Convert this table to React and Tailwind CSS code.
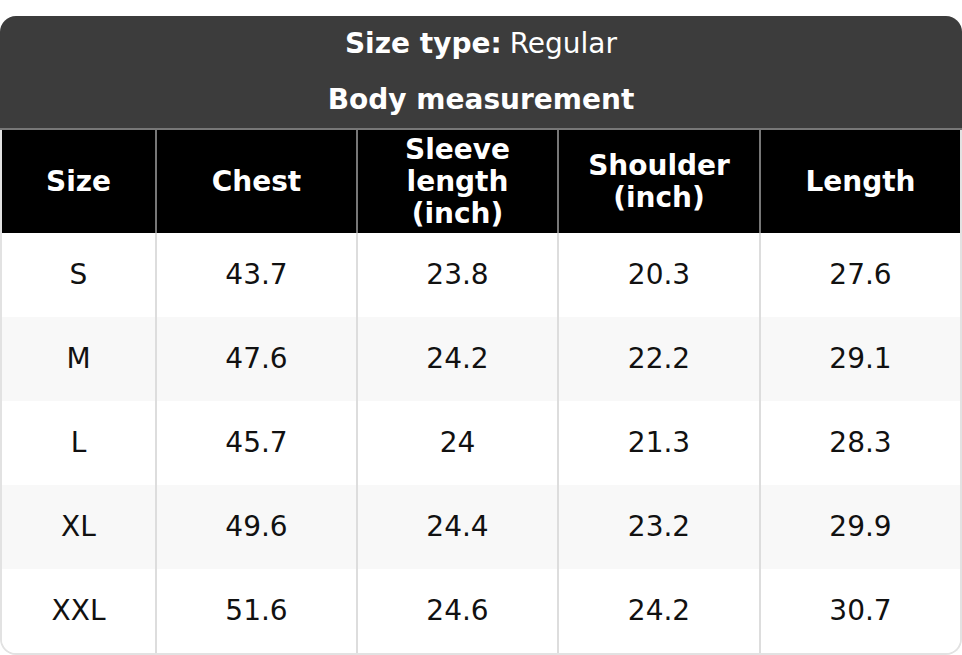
const columns = [
  ['Size'],
  ['Chest'],
  ['Sleeve', 'length', '(inch)'],
  ['Shoulder', '(inch)'],
  ['Length'],
]

const rows = [
  ['S', '43.7', '23.8', '20.3', '27.6'],
  ['M', '47.6', '24.2', '22.2', '29.1'],
  ['L', '45.7', '24', '21.3', '28.3'],
  ['XL', '49.6', '24.4', '23.2', '29.9'],
  ['XXL', '51.6', '24.6', '24.2', '30.7'],
]

const grid = 'grid grid-cols-[153px_201px_201px_202px_1fr]'

export default function App() {
  return (
    <div className="bg-white w-[962px] h-[655px] pt-4 text-[28px] font-['DejaVu_Sans',sans-serif]">
      <div className="rounded-t-2xl bg-[#3c3c3c] text-white border-b-2 border-[#777]">
        <div className="h-[56px] flex items-center justify-center">
          <span className="font-bold">Size type:</span>
          <span className="ml-2">Regular</span>
        </div>
        <div className="h-[56px] flex items-center justify-center font-bold">Body measurement</div>
      </div>

      <div className="rounded-b-2xl overflow-hidden border-x-2 border-b-2 border-[#e2e2e2]">
        <div className={`${grid} bg-black text-white font-bold h-[103px]`}>
          {columns.map((lines, i) => (
            <div
              key={i}
              className={`flex flex-col items-center justify-center leading-8 text-center ${i > 0 ? 'border-l-2 border-[#777]' : ''}`}
            >
              {lines.map((l) => (
                <span key={l}>{l}</span>
              ))}
            </div>
          ))}
        </div>

        {rows.map((row, r) => (
          <div key={row[0]} className={`${grid} h-[84px] text-[#111] ${r % 2 ? 'bg-[#f8f8f8]' : 'bg-white'}`}>
            {row.map((cell, i) => (
              <div
                key={i}
                className={`flex items-center justify-center ${i > 0 ? 'border-l-2 border-[#ddd]' : ''}`}
              >
                {cell}
              </div>
            ))}
          </div>
        ))}
      </div>
    </div>
  )
}
